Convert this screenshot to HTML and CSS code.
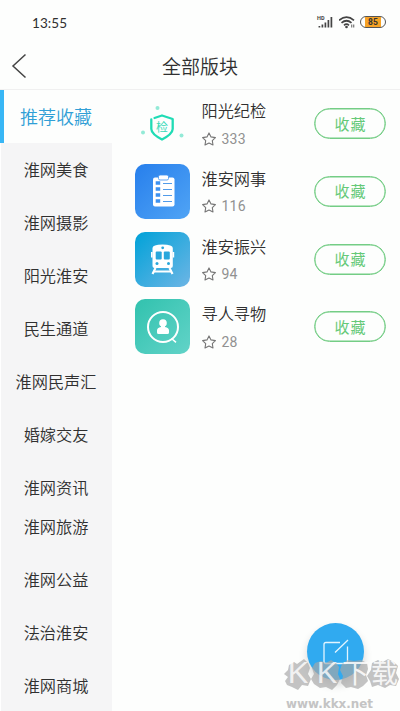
FILE: index.html
```html
<!DOCTYPE html>
<html lang="zh-CN">
<head>
<meta charset="utf-8">
<title>全部版块</title>
<link rel="stylesheet" href="styles.css">
</head>
<body>
<div class="phone">
  <div class="status">
    <span class="time">13:55</span>
    <svg class="signal" width="16" height="14" viewBox="0 0 16 14">
      <text class="hd" x="-1" y="4.8">HD</text>
      <path d="M1.400 11v1.500M4.400 9.500v3M7.400 7.500v5M10.400 5v7.500M13.400 2v10.500" fill="none" stroke="#444" stroke-width="1.700"/>
    </svg>
    <svg class="wifi" width="17" height="14" viewBox="0 0 17 14">
      <g fill="none" stroke="#444" stroke-width="1.700"><path d="M0 5.300Q7.500 -1.200 15 5.300"/><path d="M2.500 7.900Q7.500 3.600 12.500 7.900"/><path d="M5 10.300Q7.500 8.100 10 10.300"/></g>
      <circle cx="7.500" cy="12" r="1.300" fill="#444"/>
      <path d="M12.700 12.500v-3M14.700 9.500v3" fill="none" stroke="#777" stroke-width="1.200"/>
    </svg>
    <span class="battery"><span class="charge">85</span></span>
  </div>
  <header class="header">
    <svg class="back" width="16" height="26" viewBox="0 0 16 26"><path d="M14.500 1.500L2 13L14.500 24.500" fill="none" stroke="#444" stroke-width="1.500"/></svg>
    <h1 class="title">全部版块</h1>
  </header>
  <div class="content">
    <nav class="sidebar">
      <div class="tab active">推荐收藏</div>
      <div class="tab">淮网美食</div>
      <div class="tab">淮网摄影</div>
      <div class="tab">阳光淮安</div>
      <div class="tab">民生通道</div>
      <div class="tab">淮网民声汇</div>
      <div class="tab">婚嫁交友</div>
      <div class="tab group-end">淮网资讯</div>
      <div class="tab">淮网旅游</div>
      <div class="tab">淮网公益</div>
      <div class="tab">法治淮安</div>
      <div class="tab">淮网商城</div>
    </nav>
    <main class="list">
      <div class="row">
        <svg class="icon" viewBox="0 0 55 55">
          <path d="M19.500 22L27 19.500L37.700 23V33Q37.500 38 27 43.500Q16.500 38 16.300 33V23.500" fill="none" stroke="#20dcb5" stroke-width="2.300" stroke-linejoin="round" stroke-linecap="round"/>
          <text class="shield-text" x="27" y="35.700">检</text>
          <g fill="#93ead7"><circle cx="22.500" cy="12" r="2"/><circle cx="8" cy="36.500" r="2"/><circle cx="46.500" cy="39.500" r="2"/></g>
        </svg>
        <div class="info"><div class="name">阳光纪检</div><div class="count"><svg class="star" viewBox="0 0 14 14"><path d="M7 .9L9 4.900L13.400 5.600L10.300 8.700L11 13L7 11L3 13L3.700 8.700L.6 5.600L5 4.900Z"/></svg>333</div></div>
        <button class="follow">收藏</button>
      </div>
      <div class="row">
        <svg class="icon" viewBox="0 0 55 55">
          <defs><linearGradient id="blue" x1="0" y1="0" x2="1" y2="1"><stop stop-color="#277fec"/><stop offset="1" stop-color="#50a4f5"/></linearGradient></defs>
          <rect width="55" height="55" rx="10" fill="url(#blue)"/>
          <rect x="18" y="13.500" width="21.500" height="29" rx="2" fill="#fff"/>
          <rect x="23.500" y="11" width="10" height="5" rx="1.500" fill="#fff" stroke="#3c91f0" stroke-width=".8"/>
          <path d="M20.700 19h4.500M20.700 25h4.500M20.700 31h4.500M20.700 37h4.500" stroke="#3c91f0" stroke-width="3.700"/>
          <path d="M28 19.500h9M28 25.500h9M28 31.500h9M28 37.500h9" stroke="#519bea" stroke-width="1.100"/>
        </svg>
        <div class="info"><div class="name">淮安网事</div><div class="count"><svg class="star" viewBox="0 0 14 14"><path d="M7 .9L9 4.900L13.400 5.600L10.300 8.700L11 13L7 11L3 13L3.700 8.700L.6 5.600L5 4.900Z"/></svg>116</div></div>
        <button class="follow">收藏</button>
      </div>
      <div class="row">
        <svg class="icon" viewBox="0 0 55 55">
          <defs><linearGradient id="sky" x1="0" y1="0" x2="1" y2="1"><stop stop-color="#00a2d8"/><stop offset="1" stop-color="#6db5e5"/></linearGradient></defs>
          <rect width="55" height="55" rx="10" fill="url(#sky)"/>
          <path d="M17.500 16Q17.500 12.500 27.500 12.500Q37.800 12.500 37.800 16V34Q37.800 36 35.800 36H19.500Q17.500 36 17.500 34Z" fill="#fff"/>
          <path d="M20.500 36L17.500 42M34.500 36L37.500 42" stroke="#fff" stroke-width="2.200"/><path d="M19 39.500H36.500" stroke="#fff" stroke-width="2"/>
          <g fill="#28a7dc"><circle cx="27.700" cy="15.800" r="1.400"/><rect x="20.700" y="19.500" width="6" height="8" rx="1"/><rect x="28.800" y="19.500" width="6" height="8" rx="1"/><circle cx="22" cy="31.500" r="1.500"/><circle cx="33.500" cy="31.500" r="1.500"/></g>
          <path d="M16.800 20v5.500M38.400 20v5.500" stroke="#fff" stroke-width="1.600"/>
        </svg>
        <div class="info"><div class="name">淮安振兴</div><div class="count"><svg class="star" viewBox="0 0 14 14"><path d="M7 .9L9 4.900L13.400 5.600L10.300 8.700L11 13L7 11L3 13L3.700 8.700L.6 5.600L5 4.900Z"/></svg>94</div></div>
        <button class="follow">收藏</button>
      </div>
      <div class="row">
        <svg class="icon" viewBox="0 0 55 55">
          <defs><linearGradient id="mint" x1="0" y1="0" x2="1" y2="1"><stop stop-color="#31c2ae"/><stop offset="1" stop-color="#62d3c8"/></linearGradient></defs>
          <rect width="55" height="55" rx="10" fill="url(#mint)"/>
          <circle cx="28" cy="28" r="15" fill="none" stroke="#fff" stroke-width="2"/>
          <path d="M36.500 39.500L41 43.300" stroke="#fff" stroke-width="1.600"/>
          <circle cx="28" cy="24" r="3.800" fill="#fff"/><path d="M26 26h4v2q4 .5 4 3.500v2q0 1.500-1.500 1.500h-9q-1.500 0-1.500-1.500v-2q0-3 4-3.500z" fill="#fff"/>
        </svg>
        <div class="info"><div class="name">寻人寻物</div><div class="count"><svg class="star" viewBox="0 0 14 14"><path d="M7 .9L9 4.900L13.400 5.600L10.300 8.700L11 13L7 11L3 13L3.700 8.700L.6 5.600L5 4.900Z"/></svg>28</div></div>
        <button class="follow">收藏</button>
      </div>
    </main>
  </div>
  <div class="compose">
    <svg width="57" height="57" viewBox="0 0 57 57"><path d="M33 19.500H19Q17 19.500 17 21.500V38.500Q17 40.500 19 40.500H38.500Q40.500 40.500 40.500 38.500V23.500M28 29.500L41 17" fill="none" stroke="#e3f5ff" stroke-width="1.300"/></svg>
  </div>
  <div class="watermark">
    <svg width="116" height="52" viewBox="0 0 116 52">
      <g class="stamp">
        <path d="M5 6L10 3L13 5L20 0L24 4L26 9L24 15L27 20L24 27L18 26L14 31L8 28L3 26L1 22L4 18L0 15L4 11Z"/>
        <path d="M31 4L37 2L42 4L47 1L52 4L55 8L54 15L56 20L53 26L48 31L42 28L36 29L30 25L27 20L30 15L28 9Z"/>
        <path d="M58 5L64 1L70 2L77 1L83 4L84 10L82 16L84 22L79 27L74 30L67 28L62 29L57 24L59 17L56 11Z"/>
        <path d="M88 4L94 1L99 3L104 0L110 3L114 7L112 14L115 20L112 27L106 26L101 29L94 26L88 28L86 22L83 17L87 11Z"/>
      </g>
      <text class="brand" x="3" y="24" textLength="21" lengthAdjust="spacingAndGlyphs">K</text><text class="brand" x="32" y="24" textLength="21" lengthAdjust="spacingAndGlyphs">K</text><text class="brand-cn" x="58" y="24">下</text><text class="brand-cn" x="87" y="24">载</text>
      <text class="url" x="2" y="49" textLength="87" lengthAdjust="spacingAndGlyphs">www.kkx.net</text>
    </svg>
  </div>
</div>
</body>
</html>
```
FILE: styles.css
```css
* { box-sizing: border-box; }
body {
  margin: 0;
  font-family: "Noto Sans CJK SC", sans-serif;
  font-weight: 350;
  color: #303030;
  background: #fdfefd;
}
.phone {
  position: relative;
  width: 400px;
  height: 711px;
  overflow: hidden;
  display: flex;
  flex-direction: column;
}
.status {
  height: 42px;
  padding: 1px 14px 0 32px;
  display: flex;
  align-items: center;
}
.time {
  flex: 1;
  font: 13.500px/20px Lato, sans-serif;
  letter-spacing: .1px;
  padding-top: 2px;
}
.signal { margin-right: 5px; overflow: visible; }
.hd { font: bold 5.500px Roboto, sans-serif; fill: #444; }
.wifi { margin-right: 4px; }
.battery {
  width: 26px;
  height: 12px;
  border: 1.500px solid #555;
  border-radius: 6px;
  padding: 0 4px;
}
.charge {
  display: block;
  height: 10px;
  background: #f7a326;
  color: #333;
  font: bold 8.500px/10px Roboto, sans-serif;
  text-align: center;
}
.header {
  height: 48px;
  display: flex;
  align-items: center;
  padding-left: 11px;
  border-bottom: 1px solid #f0f0f0;
}
.title {
  flex: 1;
  margin: 0 27px 0 0;
  text-align: center;
  font-size: 19px;
  line-height: 28px;
  font-weight: 350;
}
.content { flex: 1; min-height: 0; display: flex; }
.sidebar { width: 112px; flex: none; background: #f5f5f6; border-left: 1px solid #fff; }
.tab {
  height: 53px;
  line-height: 53px;
  text-align: center;
  font-size: 16.200px;
  white-space: nowrap;
  padding-right: 1px;
}
.active {
  margin-left: -1px;
  background: #fdfefd;
  border-left: 4px solid #38b6f5;
  color: #309fd6;
  font-size: 18px;
  padding-right: 4px;
}
.group-end { margin-bottom: -14px; }
.list { flex: 1; padding: 6px 14px 0 22.500px; }
.row { height: 67.800px; display: flex; align-items: flex-start; }
.icon { width: 55px; height: 55px; flex: none; }
.shield-text { font: 12px "Noto Sans CJK SC", sans-serif; fill: #38d9b9; text-anchor: middle; }
.info { flex: 1; padding-left: 12px; }
.name { font-size: 16.200px; line-height: 28px; }
.count {
  display: flex;
  align-items: center;
  height: 29px;
  font: 14px Roboto, sans-serif;
  letter-spacing: .2px;
  color: #919191;
}
.star { width: 14px; height: 14px; margin-right: 6px; fill: none; stroke: #757575; stroke-width: 1.100; stroke-linejoin: round; }
.follow {
  width: 72px;
  height: 31px;
  margin: 12px 0 0;
  padding: 0 0 0 1px;
  border: 1px solid #74cd85;
  box-shadow: inset 0 0 0 .5px #74cd85;
  border-radius: 16px;
  background: transparent;
  color: #65c978;
  font: 15px/28px "Noto Sans CJK SC", sans-serif;
  letter-spacing: 1px;
}
.compose {
  position: absolute;
  left: 307px;
  top: 623px;
  width: 57px;
  height: 57px;
  border-radius: 50%;
  background: #30aaf0;
  box-shadow: 0 5px 9px rgba(0, 0, 0, .16);
}
.compose svg { display: block; }
.watermark { position: absolute; left: 284px; top: 659px; width: 116px; height: 52px; }
.watermark svg { display: block; overflow: visible; }
.stamp { fill: #a6a6a6; fill-opacity: .68; }
.brand { font: 29px "Open Sans", sans-serif; fill: #fff; fill-opacity: .8; }
.brand-cn { font: 400 27px "Noto Sans CJK SC", sans-serif; fill: #fff; fill-opacity: .85; }
.url { font: bold 13px "DejaVu Sans", sans-serif; fill: #c4c4c4; }
```
